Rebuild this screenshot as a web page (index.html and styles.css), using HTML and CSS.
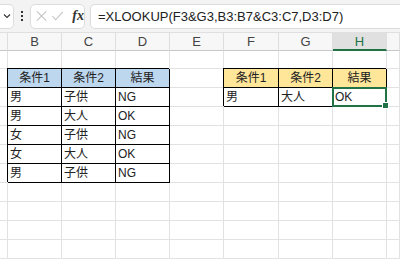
FILE: index.html
```html
<!DOCTYPE html>
<html lang="ja">
<head>
    <meta charset="UTF-8">
    <title>XLOOKUP</title>
    <link rel="stylesheet" href="styles.css">
</head>
<body>

<div class="toolbar">
    <div class="name-box">
        <svg width="10" height="10" viewBox="0 0 10 10"><path d="M2 3.5 L5 6.5 L8 3.5" fill="none" stroke="#333" stroke-width="1.1"/></svg>
    </div>
    <div class="dots"><span></span><span></span><span></span></div>
    <div class="fx-box">
        <svg width="14" height="14" viewBox="0 0 14 14"><path d="M2 2 L12 12 M12 2 L2 12" stroke="#c4c4c4" stroke-width="1.2"/></svg>
        <svg width="14" height="14" viewBox="0 0 14 14"><path d="M1.5 7 L5 11 L12.5 2.5" fill="none" stroke="#c4c4c4" stroke-width="1.2"/></svg>
        <span class="fx">fx</span>
    </div>
    <div class="formula">=XLOOKUP(F3&amp;G3,B3:B7&amp;C3:C7,D3:D7)</div>
</div>

<div class="sheet">
    <!-- column headers -->
    <div class="ch"></div>
    <div class="ch">B</div>
    <div class="ch">C</div>
    <div class="ch">D</div>
    <div class="ch">E</div>
    <div class="ch">F</div>
    <div class="ch">G</div>
    <div class="ch active">H</div>
    <div class="ch"></div>

    <!-- row 1 -->
    <div class="c"></div><div class="c"></div><div class="c"></div><div class="c"></div><div class="c"></div><div class="c"></div><div class="c"></div><div class="c"></div><div class="c"></div>

    <!-- row 2 -->
    <div class="c"></div>
    <div class="c t blue mid">条件1</div>
    <div class="c t blue mid">条件2</div>
    <div class="c t blue mid">結果</div>
    <div class="c"></div>
    <div class="c t orange mid">条件1</div>
    <div class="c t orange mid">条件2</div>
    <div class="c t orange mid">結果</div>
    <div class="c"></div>

    <!-- row 3 -->
    <div class="c"></div>
    <div class="c t">男</div>
    <div class="c t">子供</div>
    <div class="c t">NG</div>
    <div class="c"></div>
    <div class="c t">男</div>
    <div class="c t">大人</div>
    <div class="c t selected">OK<span class="handle"></span></div>
    <div class="c"></div>

    <!-- row 4 -->
    <div class="c"></div>
    <div class="c t">男</div>
    <div class="c t">大人</div>
    <div class="c t">OK</div>
    <div class="c"></div><div class="c"></div><div class="c"></div><div class="c"></div><div class="c"></div>

    <!-- row 5 -->
    <div class="c"></div>
    <div class="c t">女</div>
    <div class="c t">子供</div>
    <div class="c t">NG</div>
    <div class="c"></div><div class="c"></div><div class="c"></div><div class="c"></div><div class="c"></div>

    <!-- row 6 -->
    <div class="c"></div>
    <div class="c t">女</div>
    <div class="c t">大人</div>
    <div class="c t">OK</div>
    <div class="c"></div><div class="c"></div><div class="c"></div><div class="c"></div><div class="c"></div>

    <!-- row 7 -->
    <div class="c"></div>
    <div class="c t">男</div>
    <div class="c t">子供</div>
    <div class="c t">NG</div>
    <div class="c"></div><div class="c"></div><div class="c"></div><div class="c"></div><div class="c"></div>

    <!-- rows 8-11 -->
    <div class="c"></div><div class="c"></div><div class="c"></div><div class="c"></div><div class="c"></div><div class="c"></div><div class="c"></div><div class="c"></div><div class="c"></div>
    <div class="c"></div><div class="c"></div><div class="c"></div><div class="c"></div><div class="c"></div><div class="c"></div><div class="c"></div><div class="c"></div><div class="c"></div>
    <div class="c"></div><div class="c"></div><div class="c"></div><div class="c"></div><div class="c"></div><div class="c"></div><div class="c"></div><div class="c"></div><div class="c"></div>
    <div class="c"></div><div class="c"></div><div class="c"></div><div class="c"></div><div class="c"></div><div class="c"></div><div class="c"></div><div class="c"></div><div class="c"></div>
</div>

</body>
</html>
```

FILE: styles.css
```css
body {
    margin: 0;
    width: 400px;
    height: 268px;
    overflow: hidden;
    background-color: #ffffff;
    font-family: "Liberation Sans", "Noto Sans CJK JP", sans-serif;
    color: #222;
}

.toolbar {
    height: 33px;
    display: flex;
    align-items: center;
    background-color: #f3f3f3;
    box-sizing: border-box;
    border-bottom: 1px solid #e0e0e0;
}

.name-box {
    width: 14px;
    height: 25px;
    background-color: white;
    border: 1px solid #dcdcdc;
    border-left: none;
    border-radius: 0 5px 5px 0;
    box-sizing: border-box;
    display: flex;
    align-items: center;
    justify-content: flex-end;
    padding-right: 1px;
}

.dots {
    width: 16px;
    display: flex;
    flex-direction: column;
    align-items: center;
    gap: 2px;
}

.dots span {
    width: 2px;
    height: 2px;
    background-color: #333;
}

.fx-box {
    width: 55px;
    height: 25px;
    background-color: white;
    border: 1px solid #dcdcdc;
    border-radius: 5px;
    box-sizing: border-box;
    display: flex;
    align-items: center;
    gap: 3px;
    padding-left: 4px;
}

.fx {
    font-family: "Liberation Serif", serif;
    font-style: italic;
    font-weight: bold;
    font-size: 14px;
    margin-left: 5px;
    color: #333;
}

.formula {
    flex: 1;
    height: 25px;
    margin-left: 5px;
    background-color: white;
    border: 1px solid #dcdcdc;
    border-right: none;
    border-radius: 5px 0 0 5px;
    box-sizing: border-box;
    padding-left: 7px;
    font-size: 13px;
    line-height: 23px;
    color: #222;
}

.sheet {
    display: grid;
    grid-template-columns: 8px 54px 54px 54px 54px 55px 54px 54px 1fr;
    grid-template-rows: 18px 18px repeat(10, 19px);
}

.ch {
    background-color: #f7f7f7;
    border-right: 1px solid #dedede;
    border-bottom: 1px solid #c8c8c8;
    display: flex;
    align-items: center;
    justify-content: center;
    font-size: 13px;
    color: #444;
}

.ch.active {
    background-color: #e0e0e0;
    border-bottom: 2px solid #217346;
    color: #217346;
}

.c {
    border-right: 1px solid #e2e2e2;
    border-bottom: 1px solid #e2e2e2;
    font-size: 12px;
    line-height: 18px;
    padding-left: 2px;
    white-space: nowrap;
    overflow: visible;
}

.c.t {
    border-right-color: #000;
    border-bottom-color: #000;
    box-shadow: -1px -1px 0 #000;
}

.c.mid {
    text-align: center;
    padding-left: 0;
}

.c.blue {
    background-color: #bdd7ee;
}

.c.orange {
    background-color: #ffe699;
}

.c.selected {
    position: relative;
}

.c.selected::after {
    content: "";
    position: absolute;
    left: -1px;
    top: -1px;
    right: -1px;
    bottom: -1px;
    border: 2px solid #217346;
}

.handle {
    position: absolute;
    right: -3px;
    bottom: -3px;
    width: 5px;
    height: 5px;
    background-color: #217346;
    border: 1px solid white;
    z-index: 2;
}
```
